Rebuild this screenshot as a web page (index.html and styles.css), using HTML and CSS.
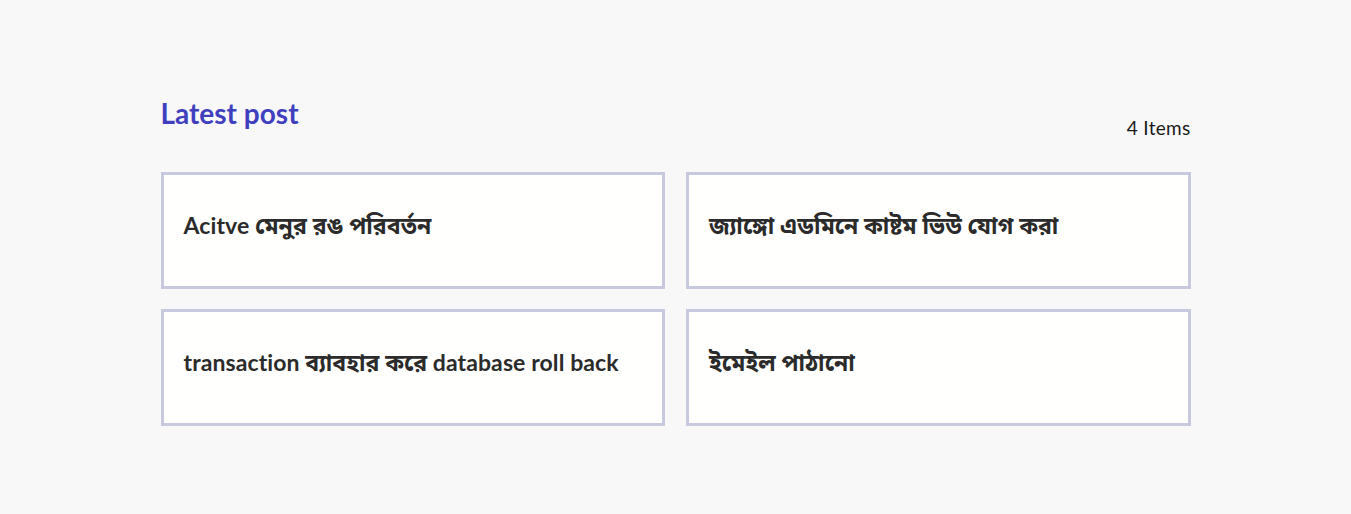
FILE: index.html
```html
<!DOCTYPE html>
<html lang="bn">
<head>
<meta charset="utf-8">
<title>Latest post</title>
<link rel="stylesheet" href="styles.css">
</head>
<body>
<main class="section">
  <div class="section-head">
    <h2 class="section-title">Latest post</h2>
    <span class="item-count">4 Items</span>
  </div>
  <div class="post-grid">
    <a class="post-card" href="#"><h3 class="post-title">Acitve মেনুর রঙ পরিবর্তন</h3></a>
    <a class="post-card" href="#"><h3 class="post-title">জ্যাঙ্গো এডমিনে কাষ্টম ভিউ যোগ করা</h3></a>
    <a class="post-card" href="#"><h3 class="post-title">transaction ব্যাবহার করে database roll back</h3></a>
    <a class="post-card" href="#"><h3 class="post-title">ইমেইল পাঠানো</h3></a>
  </div>
</main>
</body>
</html>
```
FILE: styles.css
```css
* { box-sizing: border-box; }
html, body { margin: 0; padding: 0; }
body {
  background: #f8f8f9;
  font-family: "Lato", "Noto Sans", "Noto Sans Bengali", sans-serif;
  color: #2b2b2b;
}
.section {
  width: 1030px;
  margin: 0 auto;
  padding-top: 95px;
}
.section-head {
  display: flex;
  justify-content: space-between;
  align-items: flex-end;
  margin-bottom: 41px;
}
.section-title {
  margin: 0;
  font-size: 28px;
  font-weight: 700;
  color: #4040bf;
  line-height: 36px;
}
.item-count {
  font-size: 19px;
  color: #1a1a1a;
  line-height: 22px;
  margin-bottom: -8px;
  letter-spacing: 0.3px;
}
.post-grid {
  display: grid;
  grid-template-columns: 1fr 1fr;
  gap: 20px 21px;
}
.post-card {
  display: flex;
  align-items: center;
  height: 117px;
  padding: 0 20px;
  background: #fffffd;
  border: 3px solid #c8c8df;
  text-decoration: none;
  color: #2b2b2b;
}
.post-title {
  margin: 0 0 12px;
  font-size: 23px;
  font-weight: 700;
  line-height: 30px;
  letter-spacing: 0.1px;
}
```
